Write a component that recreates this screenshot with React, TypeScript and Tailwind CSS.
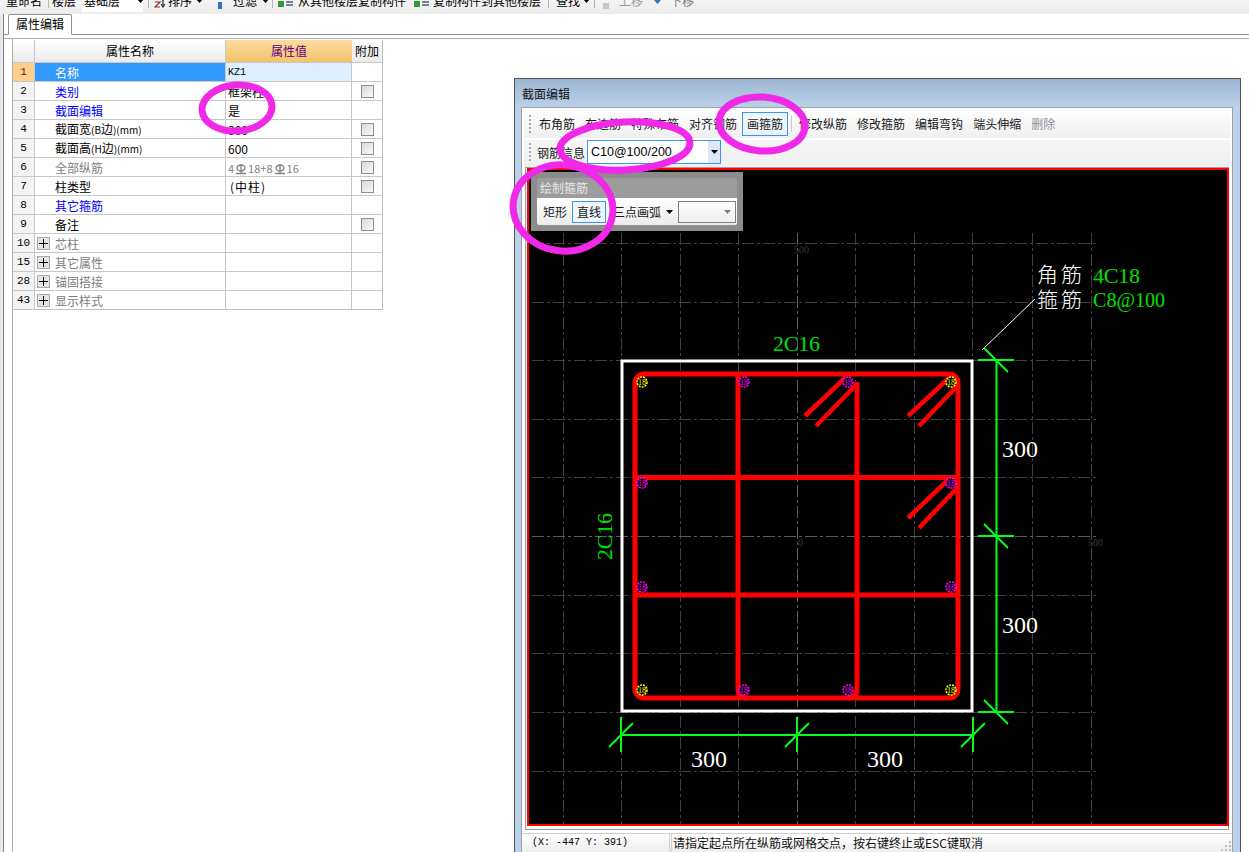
import type { ReactNode } from "react";

type Row = {
  no: number;
  name: ReactNode;
  value?: ReactNode;
  tone?: "black" | "blue" | "gray";
  check?: boolean;
  group?: boolean;
};

function BarSymbol() {
  return (
    <svg width="12" height="12" viewBox="0 0 12 12" className="mx-[1px] inline-block align-[-2px]">
      <ellipse cx="6" cy="5" rx="4" ry="3" fill="none" stroke="#808080" strokeWidth="1.3" />
      <path d="M6 1V10M1 10.5H11" stroke="#808080" strokeWidth="1.3" />
    </svg>
  );
}

const rows: Row[] = [
  { no: 1, name: "名称", value: <span className="font-['Liberation_Mono',monospace] text-[10px]">KZ1</span> },
  { no: 2, name: "类别", value: "框架柱", tone: "blue", check: true },
  { no: 3, name: "截面编辑", value: "是", tone: "blue" },
  {
    no: 4,
    name: (
      <>
        截面宽<span className="text-[10px]">(B</span>边<span className="text-[10px]">)(mm)</span>
      </>
    ),
    value: "300",
    check: true,
  },
  {
    no: 5,
    name: (
      <>
        截面高<span className="text-[10px]">(H</span>边<span className="text-[10px]">)(mm)</span>
      </>
    ),
    value: "600",
    check: true,
  },
  {
    no: 6,
    name: "全部纵筋",
    tone: "gray",
    check: true,
    value: (
      <span className="text-[11px] text-[#808080]">
        4<BarSymbol />18+8<BarSymbol />16
      </span>
    ),
  },
  { no: 7, name: "柱类型", value: <span className="pl-[2px] tracking-[1px]">(中柱)</span>, check: true },
  { no: 8, name: "其它箍筋", tone: "blue" },
  { no: 9, name: "备注", check: true },
  { no: 10, name: "芯柱", tone: "gray", group: true },
  { no: 15, name: "其它属性", tone: "gray", group: true },
  { no: 28, name: "锚固搭接", tone: "gray", group: true },
  { no: 43, name: "显示样式", tone: "gray", group: true },
];

function Sep({ className }: { className: string }) {
  return <div className={`h-[14px] w-px shrink-0 bg-[#b5b5b5] ${className}`} />;
}

function Caret({ className }: { className: string }) {
  return (
    <svg width="7" height="4" viewBox="0 0 7 4" className={`shrink-0 ${className}`}>
      <path d="M0 0H7L3.5 4Z" fill="currentColor" />
    </svg>
  );
}

function TopToolbar() {
  return (
    <div className="h-[14px] shrink-0 overflow-hidden bg-gradient-to-b from-[#f4f4f4] to-[#ececec]">
      <div className="-mt-[7px] flex h-[16px] items-center whitespace-nowrap text-[12px] leading-[16px] text-black">
        <span className="ml-[6px] w-[36px]">重命名</span>
        <Sep className="ml-[6px]" />
        <span className="ml-[3px] w-[24px]">楼层</span>
        <div className="ml-[6px] flex h-[22px] w-[61px] items-center bg-white pl-[2px]">
          <span>基础层</span>
          <Caret className="ml-[17px] text-black" />
        </div>
        <Sep className="ml-[5px]" />
        <svg width="11" height="14" viewBox="0 0 11 14" className="ml-[5px] shrink-0">
          <path d="M1 8H6L1 13H6" fill="none" stroke="#8a2f2f" strokeWidth="1.2" />
          <path d="M9 6V11M7 10L9 13L11 10" fill="none" stroke="#222" strokeWidth="1.2" />
        </svg>
        <span className="ml-[3px] w-[24px]">排序</span>
        <Caret className="ml-[4px] text-black" />
        <div className="ml-[15px] h-[7px] w-[4px] shrink-0 self-end bg-[#3b6fc4]" />
        <span className="ml-[11px] w-[25px]">过滤</span>
        <Caret className="ml-[4px] text-black" />
        <Sep className="ml-[3px]" />
        <svg width="15" height="10" viewBox="0 0 15 10" className="ml-[5px] shrink-0 self-end">
          <path d="M0 2H6V8H0Z" fill="#2e9a3a" />
          <path d="M8 0H15M8 3H15M8 6H15" stroke="#4a5a78" strokeWidth="1.4" />
        </svg>
        <span className="ml-[5px] w-[108px]">从其他楼层复制构件</span>
        <svg width="15" height="10" viewBox="0 0 15 10" className="ml-[8px] shrink-0 self-end">
          <path d="M0 2H6V8H0Z" fill="#2e9a3a" />
          <path d="M8 0H15M8 3H15M8 6H15" stroke="#4a5a78" strokeWidth="1.4" />
        </svg>
        <span className="ml-[4px] w-[108px]">复制构件到其他楼层</span>
        <Sep className="ml-[7px]" />
        <span className="ml-[7px] w-[24px]">查找</span>
        <Caret className="ml-[3px] text-black" />
        <Sep className="ml-[4px]" />
        <div className="ml-[8px] h-[6px] w-[6px] shrink-0 self-end bg-[#c8c8c8]" />
        <span className="ml-[10px] w-[24px] text-[#9a9a9a]">上移</span>
        <Caret className="ml-[11px] scale-150 text-[#3b6fc4]" />
        <span className="ml-[9px] w-[24px] text-[#7a7a7a]">下移</span>
      </div>
    </div>
  );
}

function Checkbox() {
  return <div className="h-[13px] w-[13px] border border-[#8f8f8f] bg-gradient-to-br from-[#d8d8d8] to-[#fafafa]" />;
}

function PlusBox() {
  return (
    <div className="ml-[2px] flex h-[13px] w-[13px] shrink-0 items-center justify-center border border-[#a8a8a8] bg-[#e4e4e4]">
      <svg width="9" height="9" viewBox="0 0 9 9">
        <path d="M4.5 0V9M0 4.5H9" stroke="#000" strokeWidth="1" />
      </svg>
    </div>
  );
}

function PropertyTable() {
  return (
    <div className="mt-[1px] w-[370px] border-b border-r border-[#c0c0c0] text-[12px] leading-[16px]">
      <div className="flex h-[23px] border-b border-[#c8c8c8]">
        <div className="w-[22px] border-r border-[#c8c8c8] bg-gradient-to-b from-white to-[#ebebeb]" />
        <div className="flex w-[191px] items-center justify-center border-r border-[#c8c8c8] bg-gradient-to-b from-white to-[#ebebeb]">
          属性名称
        </div>
        <div className="flex w-[126px] items-center justify-center bg-gradient-to-b from-[#fbdc9f] to-[#f3c36a] text-[#5f0080]">
          属性值
        </div>
        <div className="flex flex-1 items-center justify-center bg-gradient-to-b from-white to-[#ebebeb]">附加</div>
      </div>
      {rows.map((row) => {
        const first = row.no === 1;
        const tone =
          row.tone === "blue" ? "text-[#0000ff]" : row.tone === "gray" ? "text-[#808080]" : "text-black";
        return (
          <div key={row.no} className="flex h-[19px] border-b border-[#c8c8c8] last:h-[18px] last:border-b-0">
            <div
              className={`flex w-[22px] items-center justify-center border-r border-[#c8c8c8] font-['Liberation_Mono',monospace] text-[11px] ${
                first ? "bg-[#fdd08c] text-[#7a1010]" : "bg-[#f4f4f4] text-black"
              }`}
            >
              {row.no}
            </div>
            <div
              className={`flex w-[191px] items-center border-r border-[#c8c8c8] pt-px ${
                first ? "bg-[#3399ff] pl-[20px] text-white" : `${row.group ? "" : "pl-[20px]"} ${tone}`
              }`}
            >
              {row.group && <PlusBox />}
              {row.group && <span className="ml-[5px]">{row.name}</span>}
              {!row.group && <span>{row.name}</span>}
            </div>
            <div
              className={`flex w-[126px] items-center border-r border-[#c8c8c8] pl-[2px] pt-px ${
                first ? "bg-[#ddeeff]" : ""
              }`}
            >
              {row.value}
            </div>
            <div className="flex flex-1 items-center justify-center">{row.check && <Checkbox />}</div>
          </div>
        );
      })}
    </div>
  );
}

function Grip() {
  return <div className="mx-[2px] h-[18px] w-[2px] shrink-0 border-l-2 border-dotted border-[#a8a8a8]" />;
}

function ToolBtn({ children, active, muted }: { children: ReactNode; active?: boolean; muted?: boolean }) {
  return (
    <div
      className={`flex h-[24px] items-center border px-[4px] text-[12px] ${
        active ? "border-[#3a96f0] bg-[#eef5fc]" : "border-transparent"
      } ${muted ? "text-[#8f8f9f]" : "text-[#1a1a1a]"}`}
    >
      {children}
    </div>
  );
}

const gridX = [563, 621, 680, 738, 797, 855, 914, 972, 1032, 1091];
const gridY = [243, 302, 360, 419, 477, 536, 595, 653, 712, 771];

const bars = [
  { x: 642, y: 382, c: "#ffff00" },
  { x: 744, y: 382, c: "#ff00ff" },
  { x: 848, y: 382, c: "#ff00ff" },
  { x: 951, y: 382, c: "#ffff00" },
  { x: 642, y: 483, c: "#ff00ff" },
  { x: 951, y: 483, c: "#ff00ff" },
  { x: 642, y: 587, c: "#ff00ff" },
  { x: 951, y: 587, c: "#ff00ff" },
  { x: 642, y: 690, c: "#ffff00" },
  { x: 744, y: 690, c: "#ff00ff" },
  { x: 848, y: 690, c: "#ff00ff" },
  { x: 951, y: 690, c: "#ffff00" },
];

const hooks = [
  "M846 377L805 416",
  "M858 383L816 426",
  "M950 377L908 416",
  "M958 385L919 426",
  "M950 478L908 518",
  "M958 487L919 528",
];

function Drawing() {
  const serif = "'Liberation Serif', serif";
  const cjk = "'Noto Sans CJK SC', sans-serif";
  return (
    <svg width="698" height="654" viewBox="529 170 698 654" className="block">
      {gridX.map((x) => (
        <path key={x} d={`M${x + 0.5} 233V824`} stroke={x === 797 ? "#5c5c5c" : "#404040"} strokeDasharray="12 3 3 3" />
      ))}
      {gridY.map((y) => (
        <path key={y} d={`M532 ${y + 0.5}H1099`} stroke={y === 536 ? "#5c5c5c" : "#404040"} strokeDasharray="12 3 3 3" />
      ))}
      <g fill="#3a3a3a" fontFamily={serif} fontSize="10">
        <text x="794" y="253">500</text>
        <text x="798" y="546">0</text>
        <text x="1088" y="546">500</text>
      </g>

      <rect x="622" y="361" width="350" height="350" fill="none" stroke="#fff" strokeWidth="3" />
      <path d="M982 350L1035 299" stroke="#fff" />

      <g fill="none" stroke="#ff0000" strokeWidth="5">
        <rect x="635" y="374" width="323" height="324" rx="9" />
        <path d="M738 374V689Q738 698 747 698" />
        <path d="M857 382V689Q857 698 848 698" />
        <path d="M635 477.5H958M635 595H958" />
        {hooks.map((d) => (
          <path key={d} d={d} strokeWidth="4.5" />
        ))}
      </g>

      {bars.map((b) => (
        <g key={`${b.x}-${b.y}`}>
          <circle cx={b.x} cy={b.y} r="5" fill="#000" stroke={b.c} strokeWidth="1.5" strokeDasharray="2 1" />
          <text x={b.x} y={b.y + 3} textAnchor="middle" fontSize="8" fill={b.c} fontFamily={serif}>
            18
          </text>
        </g>
      ))}

      <g fill="none" stroke="#00ff1e" strokeWidth="2">
        <path d="M621 735H973M621 717V752M797 717V752M973 717V752" />
        <path d="M609 747L633 723M785 747L809 723M961 747L985 723" />
        <path d="M996.5 360V712M978 360H1014M978 536H1014M978 712H1014" />
        <path d="M984 348L1008 372M984 524L1008 548M984 700L1008 724" />
      </g>

      <g fill="#fff" fontFamily={serif} fontSize="24">
        <text x="691" y="767">300</text>
        <text x="867" y="767">300</text>
        <text x="1002" y="457">300</text>
        <text x="1002" y="633">300</text>
      </g>
      <g fill="#00e000" fontFamily={serif} fontSize="22">
        <text x="773" y="351" textLength="47">2C16</text>
        <text x="1093" y="283" textLength="47">4C18</text>
        <text x="1093" y="307" textLength="72" lengthAdjust="spacingAndGlyphs">C8@100</text>
        <text transform="translate(612 560) rotate(-90)" textLength="47">2C16</text>
      </g>
      <g fill="#fff" fontFamily={cjk} fontSize="21" fontWeight="300">
        <text x="1037" y="282" textLength="45">角筋</text>
        <text x="1037" y="307" textLength="45">箍筋</text>
      </g>
    </svg>
  );
}

function FloatingPanel() {
  return (
    <div className="absolute left-[2px] top-[2px] w-[212px] bg-[#8c8c8c] p-[6px] text-[12px] leading-[16px]">
      <div className="overflow-hidden rounded-[2px]">
        <div className="flex h-[20px] items-center bg-[#9c9c9c] pl-[3px] text-[#e8e8e8]">绘制箍筋</div>
        <div className="flex h-[27px] items-center bg-gradient-to-b from-white to-[#ececec] text-[#1a1a1a]">
          <span className="ml-[6px] w-[24px]">矩形</span>
          <div className="ml-[5px] flex h-[22px] w-[34px] items-center justify-center border border-[#3a96f0] bg-[#eef5fc]">
            直线
          </div>
          <span className="ml-[7px] w-[48px]">三点画弧</span>
          <Caret className="ml-[5px] text-black" />
          <div className="ml-[5px] flex h-[22px] w-[58px] items-center justify-end border border-[#808080] bg-gradient-to-b from-white to-[#eee] pr-[4px]">
            <Caret className="text-[#808080]" />
          </div>
        </div>
      </div>
    </div>
  );
}

function SectionWindow() {
  return (
    <div className="h-[790px] w-[727px] shrink-0 overflow-hidden border border-[#555] bg-[#b9d1ea]">
      <div className="flex h-[28px] items-center bg-gradient-to-b from-[#9cb5d2] to-[#b9d1ea] pl-[7px] pt-[1px] text-[12px] text-[#111]">
        截面编辑
      </div>
      <div className="ml-[6px] w-[712px] border border-[#a0a0a0] bg-white">
        <div className="mx-[2px] mt-[2px] flex h-[28px] items-center rounded-[2px] bg-gradient-to-b from-white to-[#efefef] pl-[3px]">
          <Grip />
          <div className="ml-[1px] flex items-center">
            <ToolBtn>布角筋</ToolBtn>
            <ToolBtn>布边筋</ToolBtn>
            <ToolBtn>特殊布筋</ToolBtn>
            <ToolBtn>对齐钢筋</ToolBtn>
            <ToolBtn active>画箍筋</ToolBtn>
            <div className="ml-[3px] mr-[2px] h-[16px] w-px bg-[#c4c4c4]" />
            <ToolBtn>修改纵筋</ToolBtn>
            <ToolBtn>修改箍筋</ToolBtn>
            <ToolBtn>编辑弯钩</ToolBtn>
            <ToolBtn>端头伸缩</ToolBtn>
            <ToolBtn muted>删除</ToolBtn>
          </div>
        </div>
        <div className="mx-[2px] mt-[2px] flex h-[27px] items-start bg-gradient-to-b from-[#f6f6f6] to-[#efefef] pl-[3px]">
          <div className="flex h-[24px] items-center">
            <Grip />
          </div>
          <span className="ml-[4px] flex h-[24px] w-[50px] items-center pt-px text-[12px] text-[#1a1a1a]">钢筋信息</span>
          <div className="flex h-[24px] w-[134px] items-center border border-[#3a96f0] bg-white pl-[3px] font-['Liberation_Sans',sans-serif] text-[12.5px]">
            <span className="flex-1">C10@100/200</span>
            <div className="flex h-[22px] w-[12px] items-center justify-center bg-[#dce8f6]">
              <Caret className="text-black" />
            </div>
          </div>
        </div>
        <div className="mx-[3px] border border-[#a0a0a0] px-[1px] pb-[3px]">
          <div className="relative h-[658px] w-[702px] border-2 border-[#ff0000] bg-black">
            <Drawing />
            <FloatingPanel />
          </div>
        </div>
        <div className="relative mt-[3px] flex h-[19px] border-t border-[#d0d0d0] bg-gradient-to-b from-white to-[#eeeeee] text-[12px] leading-[16px]">
          <div className="flex w-[148px] items-center border-r border-[#cfcfcf] pl-[10px] font-['Liberation_Mono',monospace] text-[10px]">
            (X: -447 Y: 391)
          </div>
          <div className="ml-[1px] flex items-center border-l border-[#cfcfcf] pl-[1px] text-[#111]">
            请指定起点所在纵筋或网格交点，按右键终止或ESC键取消
          </div>
          {/* size grip */}
          <svg width="10" height="10" viewBox="0 0 10 10" className="absolute bottom-[1px] right-[1px]">
            <path d="M8 0h2v2h-2zM4 4h2v2h-2zM8 4h2v2h-2zM0 8h2v2h-2zM4 8h2v2h-2zM8 8h2v2h-2z" fill="#c0c0c0" />
          </svg>
        </div>
      </div>
    </div>
  );
}

export default function App() {
  return (
    <div className="relative flex h-[852px] w-[1249px] flex-col overflow-hidden bg-white font-['Noto_Sans_CJK_SC',sans-serif] text-black">
      <TopToolbar />
      <div className="flex min-h-0 flex-1 bg-[#e8e8ea]">
        <div className="w-[3px] shrink-0" />
        <div className="flex min-w-0 flex-1 flex-col border-l border-[#808088] bg-white">
          <div className="flex h-[21px] shrink-0 items-stretch border-b border-[#8f8f98] pl-[4px]">
            <div className="-mb-px flex w-[64px] items-center justify-center rounded-t-[2px] border border-[#8f8f98] border-b-white bg-white pb-px text-[12px]">
              属性编辑
            </div>
          </div>
          <div className="mt-[3px] flex min-h-0 flex-1 border-t border-[#b0b0b4]">
            <div className="ml-[8px] w-[502px] shrink-0 border-l border-[#b0b0b4]">
              <PropertyTable />
            </div>
            <div className="mt-[39px]">
              <SectionWindow />
            </div>
          </div>
        </div>
      </div>

      {/* hand-drawn markers over the screenshot */}
      <svg width="1249" height="852" className="pointer-events-none absolute left-0 top-0" fill="none" stroke="#f028e8" strokeWidth="7">
        <ellipse cx="237" cy="108" rx="35" ry="23" transform="rotate(-4 237 108)" />
        <ellipse cx="625" cy="146" rx="65" ry="24" transform="rotate(-3 625 146)" />
        <ellipse cx="762" cy="124" rx="43" ry="27" transform="rotate(4 762 124)" />
        <ellipse cx="563" cy="208" rx="50" ry="43" transform="rotate(8 563 208)" />
      </svg>
    </div>
  );
}
